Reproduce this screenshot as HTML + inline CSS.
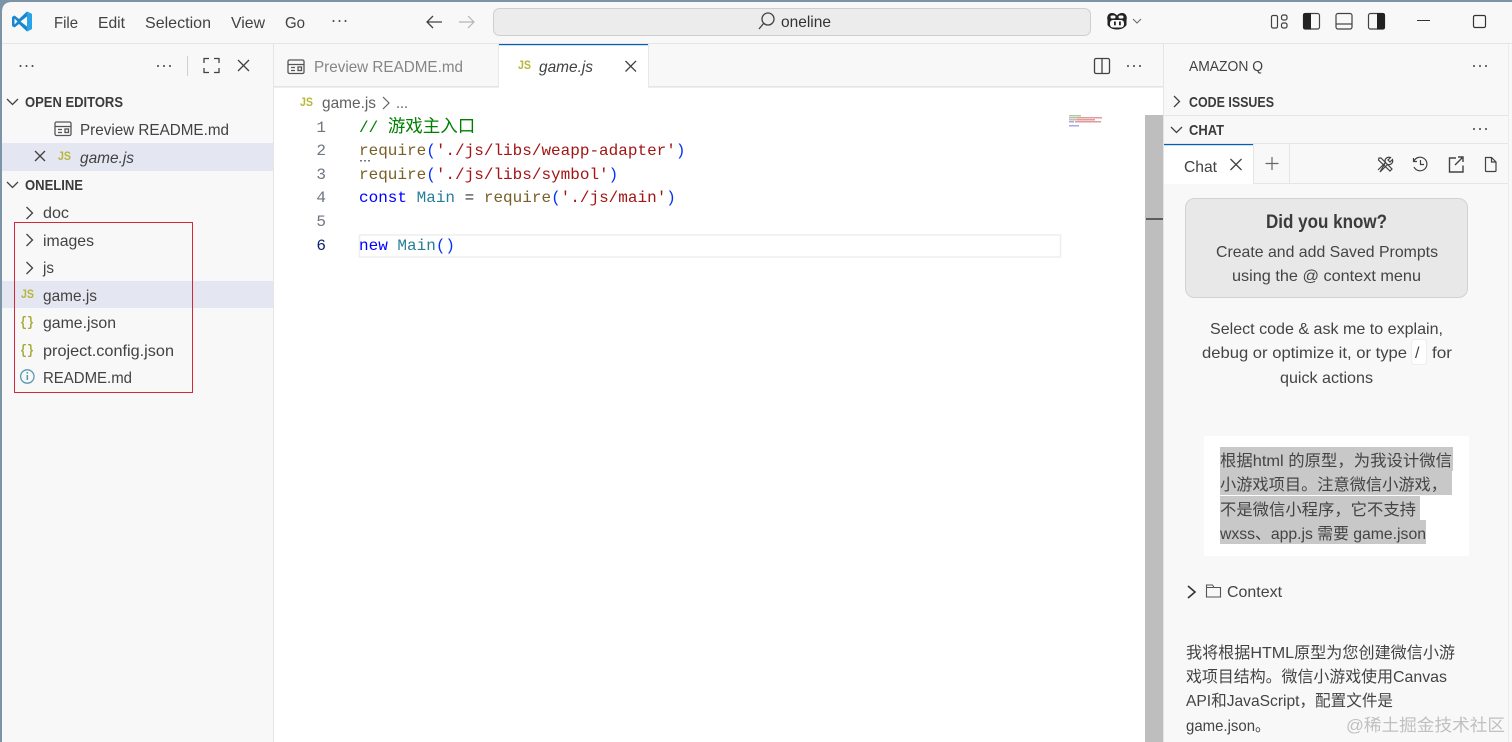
<!DOCTYPE html>
<html><head><meta charset="utf-8"><title>game.js - oneline</title>
<style>
html,body{margin:0;padding:0;width:1512px;height:742px;overflow:hidden;background:#7d94a6}
svg{display:block}
text{font-family:"Liberation Sans","Noto Sans CJK SC",sans-serif;font-size:16px;fill:#424242;white-space:pre}
.b{font-weight:bold;font-size:15px;fill:#3b3b3b}
.m{font-family:"Liberation Mono","Noto Sans CJK SC",monospace;font-size:16px}
.n{fill:#6e7681;text-anchor:end;font-family:"Liberation Mono",monospace;font-size:16px}
.i{fill:none;stroke:#424242;stroke-width:1.3}
.js{font-weight:bold;font-size:12px;fill:#b7b73b}
.br{font-weight:bold;font-size:14px;fill:#a9a93a;font-family:"Liberation Mono",monospace}
.c{font-size:16px;fill:#444}
</style></head><body>
<svg width="1512" height="742" viewBox="0 0 1512 742" xmlns="http://www.w3.org/2000/svg">
<rect width="1512" height="742" fill="#7d94a6"/>
<path d="M2 742V12Q2 2 12 2H1512V742Z" fill="#f8f8f8"/>
<rect x="2" y="43" width="1510" height="1" fill="#e5e5e5"/>
<rect x="273" y="44" width="1" height="698" fill="#e5e5e5"/>
<rect x="1163" y="44" width="1" height="698" fill="#e5e5e5"/>
<rect x="1508" y="44" width="1" height="698" fill="#ececec"/>

<!-- logo -->
<path d="M27 11.500 32 14V29L27 31.500 19 24 14.500 27.500 12 26V17L14.500 15.500 19 19Z" fill="#1a86d0"/>
<path d="M27 16.500V26.500L20.500 21.500Z" fill="#f8f8f8"/>
<path d="M14.500 18.500V24.500L17.500 21.500Z" fill="#f8f8f8"/>
<path d="M27 11.500 32 14V29L27 31.500Z" fill="#2aa2e6"/>

<!-- menu -->
<text x="54" y="28" textLength="24" lengthAdjust="spacingAndGlyphs">File</text>
<text x="98" y="28" textLength="27" lengthAdjust="spacingAndGlyphs">Edit</text>
<text x="145" y="28" textLength="66" lengthAdjust="spacingAndGlyphs">Selection</text>
<text x="231" y="28" textLength="34" lengthAdjust="spacingAndGlyphs">View</text>
<text x="285" y="28" textLength="20" lengthAdjust="spacingAndGlyphs">Go</text>
<g fill="#424242"><circle cx="333.500" cy="21" r="1"/><circle cx="339.500" cy="21" r="1"/><circle cx="345.500" cy="21" r="1"/></g>
<path d="M442 22H427M433 16 427 22 433 28" class="i"/>
<path d="M459 22H474M468 16 474 22 468 28" fill="none" stroke="#b5b5b5" stroke-width="1.200"/>

<!-- search -->
<rect x="493.500" y="8.500" width="597" height="27" rx="6" fill="#ececec" stroke="#cfcfcf"/>
<circle cx="768" cy="19" r="6" class="i"/>
<path d="M763.500 23.500 759 29" class="i"/>
<text x="781" y="27" textLength="50" lengthAdjust="spacingAndGlyphs" style="fill:#333">oneline</text>

<!-- copilot -->
<path d="M1112 13C1108 13 1106.500 17 1107.500 20V25C1110 28.500 1113.500 29.500 1117 29.500S1124 28.500 1126.500 25V20C1127.500 17 1126 13 1122 13 1120 13 1118 14 1117 15.500 1116 14 1114 13 1112 13Z" fill="#222"/>
<rect x="1110" y="20" width="14" height="7.500" rx="3" fill="#f8f8f8"/>
<rect x="1110.500" y="15.500" width="5" height="3" rx="1.500" fill="#f8f8f8"/><rect x="1118.500" y="15.500" width="5" height="3" rx="1.500" fill="#f8f8f8"/>
<rect x="1114" y="21.500" width="1.800" height="3.800" fill="#222"/><rect x="1119" y="21.500" width="1.800" height="3.800" fill="#222"/>
<path d="M1133 19 1137 23 1141 19" fill="none" stroke="#666" stroke-width="1"/>

<!-- layout icons -->
<g fill="none" stroke="#424242" stroke-width="1.200">
<rect x="1271.500" y="15.500" width="6" height="12.500" rx="1.500"/>
<rect x="1281.500" y="15" width="5.500" height="5" rx="1.800"/><rect x="1281.500" y="23" width="5.500" height="5" rx="1.800"/>
<rect x="1303.500" y="13.500" width="16" height="15.500" rx="2"/>
<rect x="1336" y="13.500" width="16" height="15.500" rx="2"/><path d="M1336 24H1352"/>
<rect x="1368.500" y="13.500" width="16" height="15.500" rx="2"/>
<rect x="1473.500" y="15.500" width="12" height="12" rx="1.500" stroke="#333"/>
</g>
<path d="M1305 13H1311V29.500H1305Q1303 29.500 1303 27.500V15Q1303 13 1305 13Z" fill="#222"/>
<path d="M1377 13H1383Q1385 13 1385 15V27.500Q1385 29.500 1383 29.500H1377Z" fill="#222"/>
<rect x="1417" y="20" width="13" height="1" fill="#333"/>

<!-- sidebar header -->
<g fill="#424242">
<circle cx="20.500" cy="66" r="1"/><circle cx="26.500" cy="66" r="1"/><circle cx="32.500" cy="66" r="1"/>
<circle cx="158" cy="66" r="1"/><circle cx="164" cy="66" r="1"/><circle cx="170" cy="66" r="1"/>
</g>
<rect x="187" y="56" width="1" height="20" fill="#cfcfcf"/>
<path d="M204 63V58.500H209M214 58.500H219V63M219 68V72.500H214M209 72.500H204V68" class="i"/>
<path d="M238 60 249 71M249 60 238 71" class="i"/>

<!-- explorer -->
<path d="M7 99 12.500 104.500 18 99" class="i"/>
<text class="b" x="25" y="107" textLength="98" lengthAdjust="spacingAndGlyphs">OPEN EDITORS</text>
<g fill="none" stroke="#555" stroke-width="1.300"><rect x="55" y="122" width="16" height="13.500" rx="1.500"/><path d="M55 126.500H71M58 129.500H62M58 132.500H62"/><rect x="65" y="129" width="3.500" height="3.500"/></g>
<text x="80" y="135" textLength="149" lengthAdjust="spacingAndGlyphs">Preview README.md</text>
<rect x="2" y="143" width="271" height="28" fill="#e4e6f1"/>
<path d="M35 151 45 161M45 151 35 161" class="i"/>
<text class="js" x="58" y="160" textLength="13" lengthAdjust="spacingAndGlyphs">JS</text>
<text x="80" y="163" textLength="54" lengthAdjust="spacingAndGlyphs" font-style="italic">game.js</text>
<path d="M7 182 12.500 187.500 18 182" class="i"/>
<text class="b" x="25" y="190" textLength="58" lengthAdjust="spacingAndGlyphs">ONELINE</text>

<path d="M26.500 207 32.500 213 26.500 219" class="i"/>
<text x="43" y="218" textLength="26" lengthAdjust="spacingAndGlyphs">doc</text>
<path d="M26.500 234 32.500 240 26.500 246" class="i"/>
<text x="43" y="246" textLength="51" lengthAdjust="spacingAndGlyphs">images</text>
<path d="M26.500 262 32.500 268 26.500 274" class="i"/>
<text x="43" y="273" textLength="11" lengthAdjust="spacingAndGlyphs">js</text>
<rect x="2" y="281" width="271" height="27" fill="#e4e6f1"/>
<text class="js" x="21" y="298" textLength="13" lengthAdjust="spacingAndGlyphs">JS</text>
<text x="43" y="301" textLength="54" lengthAdjust="spacingAndGlyphs">game.js</text>
<text class="br" x="20" y="326" textLength="14" lengthAdjust="spacingAndGlyphs">{}</text>
<text x="43" y="328" textLength="73" lengthAdjust="spacingAndGlyphs">game.json</text>
<text class="br" x="20" y="354" textLength="14" lengthAdjust="spacingAndGlyphs">{}</text>
<text x="43" y="356" textLength="131" lengthAdjust="spacingAndGlyphs">project.config.json</text>
<circle cx="27.300" cy="376.500" r="6.700" fill="none" stroke="#5a9bb0" stroke-width="1.300"/>
<rect x="26.500" y="375" width="1.600" height="5" fill="#5a9bb0"/><rect x="26.500" y="372" width="1.600" height="1.600" fill="#5a9bb0"/>
<text x="43" y="383" textLength="89" lengthAdjust="spacingAndGlyphs">README.md</text>
<rect x="14.500" y="222.500" width="178" height="170" fill="none" stroke="#d3283c" stroke-width="1"/>

<!-- tabs -->
<rect x="274" y="86" width="889" height="1.500" fill="#e5e5e5"/>
<rect x="498" y="44" width="1" height="43" fill="#e8e8e8"/>
<g fill="none" stroke="#555" stroke-width="1.300"><rect x="288" y="60" width="16" height="13.500" rx="1.500"/><path d="M288 64.500H304M291 67.500H295M291 70.500H295"/><rect x="298" y="67" width="3.500" height="3.500"/></g>
<text x="314" y="72" textLength="149" lengthAdjust="spacingAndGlyphs" style="fill:#858585">Preview README.md</text>
<rect x="499" y="44" width="149" height="44" fill="#fff"/>
<rect x="499" y="44" width="149" height="1.200" fill="#005fb8"/>
<rect x="648" y="44" width="1" height="43" fill="#e8e8e8"/>
<text class="js" x="518" y="69" textLength="13" lengthAdjust="spacingAndGlyphs">JS</text>
<text x="539" y="72" textLength="54" lengthAdjust="spacingAndGlyphs" font-style="italic">game.js</text>
<path d="M625.500 61 636 71.500M636 61 625.500 71.500" class="i"/>
<rect x="1094.500" y="58.500" width="15" height="15" rx="1.500" class="i"/><path d="M1102 58.500V73.500" class="i"/>
<g fill="#424242"><circle cx="1128" cy="66" r="1"/><circle cx="1134" cy="66" r="1"/><circle cx="1140" cy="66" r="1"/></g>

<!-- editor -->
<rect x="274" y="88" width="889" height="654" fill="#fff"/>
<text class="js" x="300" y="106" textLength="13" lengthAdjust="spacingAndGlyphs">JS</text>
<text x="322" y="108" textLength="54" lengthAdjust="spacingAndGlyphs" style="fill:#616161">game.js</text>
<path d="M383 97 389 103 383 109" fill="none" stroke="#616161" stroke-width="1.200"/>
<text x="396" y="108" textLength="12" lengthAdjust="spacingAndGlyphs" style="fill:#616161">...</text>

<rect x="359.500" y="235" width="701" height="22" fill="none" stroke="#eeeeee" stroke-width="1.500"/>
<text class="n" x="326" y="132">1</text>
<text class="n" x="326" y="155">2</text>
<text class="n" x="326" y="179">3</text>
<text class="n" x="326" y="202">4</text>
<text class="n" x="326" y="226">5</text>
<text class="n" x="326" y="250" style="fill:#0b216f">6</text>

<text class="m" x="359" y="132" style="fill:#008000">// <tspan font-size="17.500">游戏主入口</tspan></text>
<text class="m" x="359" y="155"><tspan fill="#795e26">require</tspan><tspan fill="#0431fa">(</tspan><tspan fill="#a31515">'./js/libs/weapp-adapter'</tspan><tspan fill="#0431fa">)</tspan></text>
<g fill="#777"><rect x="360" y="160" width="2" height="1.500"/><rect x="364" y="160" width="2" height="1.500"/><rect x="368" y="160" width="2" height="1.500"/></g>
<text class="m" x="359" y="179"><tspan fill="#795e26">require</tspan><tspan fill="#0431fa">(</tspan><tspan fill="#a31515">'./js/libs/symbol'</tspan><tspan fill="#0431fa">)</tspan></text>
<text class="m" x="359" y="202"><tspan fill="#0000ff">const</tspan><tspan fill="#267f99"> Main</tspan><tspan fill="#333"> = </tspan><tspan fill="#795e26">require</tspan><tspan fill="#0431fa">(</tspan><tspan fill="#a31515">'./js/main'</tspan><tspan fill="#0431fa">)</tspan></text>
<text class="m" x="359" y="250"><tspan fill="#0000ff">new</tspan><tspan fill="#267f99"> Main</tspan><tspan fill="#0431fa">()</tspan></text>

<!-- minimap -->
<g opacity=".75">
<rect x="1069" y="115" width="12" height="1.500" fill="#8dbb8d"/>
<rect x="1069" y="117" width="8" height="1.500" fill="#b3a98c"/><rect x="1077" y="117" width="25" height="1.500" fill="#d97a7a"/>
<rect x="1069" y="119" width="8" height="1.500" fill="#b3a98c"/><rect x="1077" y="119" width="18" height="1.500" fill="#d97a7a"/>
<rect x="1069" y="121" width="5" height="1.500" fill="#8a8ae0"/><rect x="1075" y="121" width="26" height="1.500" fill="#d97a7a"/>
<rect x="1069" y="125" width="10" height="1.500" fill="#8a8ae0"/>
</g>
<rect x="1145" y="115" width="18" height="627" fill="#bebebe"/>
<rect x="1146" y="218" width="17" height="2" fill="#5c5c5c"/>

<!-- right panel -->
<text x="1189" y="71" textLength="74" lengthAdjust="spacingAndGlyphs" style="font-size:15px">AMAZON Q</text>
<g fill="#424242"><circle cx="1474" cy="66" r="1"/><circle cx="1480" cy="66" r="1"/><circle cx="1486" cy="66" r="1"/><circle cx="1474" cy="129" r="1"/><circle cx="1480" cy="129" r="1"/><circle cx="1486" cy="129" r="1"/></g>
<path d="M1174 96 1179.500 101.500 1174 107" class="i"/>
<text class="b" x="1189" y="107" textLength="85" lengthAdjust="spacingAndGlyphs">CODE ISSUES</text>
<rect x="1164" y="115" width="344" height="1" fill="#e5e5e5"/>
<path d="M1171 127 1176.500 132.500 1182 127" class="i"/>
<text class="b" x="1189" y="135" textLength="35" lengthAdjust="spacingAndGlyphs">CHAT</text>
<rect x="1164" y="143" width="344" height="1" fill="#e5e5e5"/>
<rect x="1164" y="183" width="344" height="1" fill="#e5e5e5"/>
<rect x="1164" y="144" width="89" height="40" fill="#fff"/>
<rect x="1164" y="144" width="89" height="1.200" fill="#005fb8"/>
<rect x="1253" y="144" width="1" height="40" fill="#e5e5e5"/>
<rect x="1289" y="144" width="1" height="40" fill="#e5e5e5"/>
<text x="1184" y="172" textLength="33" lengthAdjust="spacingAndGlyphs">Chat</text>
<path d="M1230.500 159 1241.500 170M1241.500 159 1230.500 170" class="i"/>
<path d="M1272 157V170M1265.500 163.500H1278.500" fill="none" stroke="#666" stroke-width="1.200"/>
<!-- wrench/screwdriver -->
<g fill="none" stroke="#424242" stroke-width="1.200">
<path d="M1379 158 1381 158 1392 169 1390 171 1378.500 160Z"/>
<path d="M1378 170 1385.500 162.500M1385.500 162.500C1384 159 1387 156.500 1390.500 157.500L1388 160 1390 162 1392.500 159.500C1393.500 163 1390.500 165.500 1387.500 164.500L1380 172Z"/>
<path d="M1414 161A6.800 6.800 0 1 1 1414 167M1413.500 158V161.500H1417M1420.500 160V164.500H1424"/>
<path d="M1456 158H1449.500V172H1463V165.500M1455 165 1463 157M1458 157H1463V162" stroke-width="1.400"/>
<path d="M1485.500 157.500H1491.500L1496 162V170.500Q1496 171.500 1495 171.500H1486.500Q1485.500 171.500 1485.500 170.500ZM1491.500 157.500V162H1496"/>
</g>

<!-- did you know -->
<rect x="1185.500" y="198.500" width="282" height="99" rx="9" fill="#e8e8e8" stroke="#d2d2d2"/>
<text x="1266" y="228" textLength="121" lengthAdjust="spacingAndGlyphs" style="font-size:19px;font-weight:bold;fill:#3b3b3b">Did you know?</text>
<text class="c" x="1216" y="257" textLength="222" lengthAdjust="spacingAndGlyphs">Create and add Saved Prompts</text>
<text class="c" x="1232" y="281" textLength="189" lengthAdjust="spacingAndGlyphs">using the @ context menu</text>
<text class="c" x="1210" y="334" textLength="233" lengthAdjust="spacingAndGlyphs">Select code &amp; ask me to explain,</text>
<text class="c" x="1202" y="358" textLength="205" lengthAdjust="spacingAndGlyphs">debug or optimize it, or type</text>
<rect x="1411.500" y="339.500" width="15" height="25" rx="3" fill="#fff" stroke="#eeeeee"/>
<text class="c" x="1415" y="358">/</text>
<text class="c" x="1432" y="358" textLength="20" lengthAdjust="spacingAndGlyphs">for</text>
<text class="c" x="1280" y="383" textLength="93" lengthAdjust="spacingAndGlyphs">quick actions</text>

<!-- user message -->
<rect x="1204" y="436" width="265" height="120" fill="#fff"/>
<g fill="#c8c8c8">
<rect x="1220" y="447" width="233" height="24"/>
<rect x="1220" y="471" width="232" height="24"/>
<rect x="1220" y="496" width="200" height="24"/>
<rect x="1220" y="520" width="206" height="24"/>
</g>
<text class="c" x="1220" y="466" textLength="232" lengthAdjust="spacingAndGlyphs">根据html 的原型，为我设计微信</text>
<text class="c" x="1220" y="490" textLength="227" lengthAdjust="spacingAndGlyphs">小游戏项目。注意微信小游戏，</text>
<text class="c" x="1220" y="515" textLength="196" lengthAdjust="spacingAndGlyphs">不是微信小程序，它不支持</text>
<text class="c" x="1220" y="539" textLength="206" lengthAdjust="spacingAndGlyphs">wxss、app.js 需要 game.json</text>

<!-- context -->
<path d="M1188 586 1195 592 1188 598" fill="none" stroke="#333" stroke-width="1.600"/>
<path d="M1206.500 597V585H1212.500L1214 587.500H1220.500V597ZM1206.500 587.500H1214" fill="none" stroke="#555" stroke-width="1.100"/>
<text class="c" x="1227" y="597" textLength="55" lengthAdjust="spacingAndGlyphs">Context</text>

<!-- response -->
<text class="c" x="1186" y="658" textLength="269" lengthAdjust="spacingAndGlyphs">我将根据HTML原型为您创建微信小游</text>
<text class="c" x="1186" y="682" textLength="261" lengthAdjust="spacingAndGlyphs">戏项目结构。微信小游戏使用Canvas</text>
<text class="c" x="1186" y="706" textLength="207" lengthAdjust="spacingAndGlyphs">API和JavaScript，配置文件是</text>
<text class="c" x="1186" y="731" textLength="84" lengthAdjust="spacingAndGlyphs">game.json。</text>
<text x="1346" y="731" textLength="159" lengthAdjust="spacingAndGlyphs" style="font-size:17px;fill:#c0c0c0">@稀土掘金技术社区</text>
</svg>
</body></html>
